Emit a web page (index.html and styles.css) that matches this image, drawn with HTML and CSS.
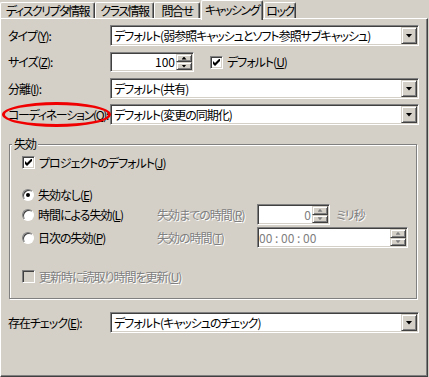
FILE: index.html
```html
<!DOCTYPE html>
<html lang="ja">
  <head>
    <meta charset="UTF-8" />
    <title>キャッシング</title>
    <link rel="stylesheet" href="styles.css">
  </head>
  <body>
    <div class="tabs">
      <div class="tab t1">ディスクリプタ情報</div>
      <div class="tab t2">クラス情報</div>
      <div class="tab t3">問合せ</div>
      <div class="tab t4 active">キャッシング</div>
      <div class="tab t5">ロック</div>
    </div>

    <div class="panel">
      <!-- upper fields -->
      <div class="row r1">
        <span class="lbl">タイプ(<u>Y</u>):</span>
        <div class="combo">
          <span class="val">デフォルト(弱参照キャッシュとソフト参照サブキャッシュ)</span>
          <span class="drop"><i class="arrow"></i></span>
        </div>
      </div>

      <div class="row r2">
        <span class="lbl">サイズ(<u>Z</u>):</span>
        <div class="spin size">
          <span class="num">100</span>
          <span class="btns"><span class="sb"><i class="up"></i></span><span class="sb"><i class="dn"></i></span></span>
        </div>
        <span class="check on def">
          <svg width="7" height="7" viewBox="0 0 7 7"><path d="M0 2L2 4L6 0H7V2L2 7H2L0 5Z" fill="#000"/></svg>
        </span>
        <span class="ctext">デフォルト(<u>U</u>)</span>
      </div>

      <div class="row r3">
        <span class="lbl">分離(<u>I</u>):</span>
        <div class="combo">
          <span class="val">デフォルト(共有)</span>
          <span class="drop"><i class="arrow"></i></span>
        </div>
      </div>

      <div class="row r4">
        <span class="ring"></span>
        <span class="lbl">コーディネーション(<u>O</u>):</span>
        <div class="combo">
          <span class="val">デフォルト(変更の同期化)</span>
          <span class="drop"><i class="arrow"></i></span>
        </div>
      </div>

      <!-- expiry group -->
      <div class="group">
        <span class="legend">失効</span>

        <div class="g-row ga">
          <span class="check on">
            <svg width="7" height="7" viewBox="0 0 7 7"><path d="M0 2L2 4L6 0H7V2L2 7H2L0 5Z" fill="#000"/></svg>
          </span>
          <span class="ctext">プロジェクトのデフォルト(<u>J</u>)</span>
        </div>

        <div class="g-row gb">
          <span class="radio on"></span>
          <span class="rtext">失効なし(<u>E</u>)</span>
        </div>

        <div class="g-row gc">
          <span class="opt"><span class="radio"></span><span class="rtext">時間による失効(<u>L</u>)</span></span>
          <span class="sub dim">失効までの時間(<u>R</u>)</span>
          <div class="spin ms">
            <span class="num dim-num">0</span>
            <span class="btns"><span class="sb"><i class="up off"></i></span><span class="sb"><i class="dn off"></i></span></span>
          </div>
          <span class="dim unit">ミリ秒</span>
        </div>

        <div class="g-row gd">
          <span class="opt"><span class="radio"></span><span class="rtext">日次の失効(<u>P</u>)</span></span>
          <span class="sub dim">失効の時間(<u>T</u>)</span>
          <div class="spin clock">
            <span class="time">00 : 00 : 00</span>
            <span class="btns"><span class="sb"><i class="up off"></i></span><span class="sb"><i class="dn off"></i></span></span>
          </div>
        </div>

        <div class="g-row ge">
          <span class="check off"></span>
          <span class="ctext dim">更新時に読取り時間を更新(<u>U</u>)</span>
        </div>
      </div>

      <div class="row r5">
        <span class="lbl">存在チェック(<u>E</u>):</span>
        <div class="combo">
          <span class="val">デフォルト(キャッシュのチェック)</span>
          <span class="drop"><i class="arrow"></i></span>
        </div>
      </div>
    </div>
  </body>
</html>
```

FILE: styles.css
```css
:root {
  --face: #d4d0c8;
  --shadow: #808080;
  --dark: #404040;
  --light: #ffffff;
  --ring: #f00000;
}
* {
  box-sizing: border-box;
}
body {
  margin: 0;
  width: 429px;
  height: 377px;
  overflow: hidden;
  background: var(--face);
  color: #000;
  font-family: "Noto Sans CJK JP", sans-serif;
  font-size: 12px;
  line-height: 14px;
  letter-spacing: -1px;
  font-feature-settings: "palt";
}
u {
  text-decoration-thickness: 1px;
  text-underline-offset: 1px;
}

/* ---------- Tabs ---------- */
.tabs {
  display: flex;
  align-items: flex-end;
  height: 18px;
}
.tab {
  height: 16px;
  padding-top: 1px;
  text-align: center;
  white-space: nowrap;
  letter-spacing: -1.5px;
  background: var(--face);
  border-top: 1px solid var(--light);
  border-left: 1px solid var(--light);
  border-right: 1px solid var(--dark);
  border-radius: 2px 2px 0 0;
  box-shadow: inset -1px 0 var(--shadow);
}
.t1 { width: 95px; }
.t2 { width: 59px; }
.t3 { width: 46px; }
.t4 { width: 62px; margin-left: 1px; }
.t5 { width: 32px; margin-left: 1px; }
.tab.active {
  position: relative;
  z-index: 1;
  height: 20px;
  margin-bottom: -2px;
  padding-top: 2px;
}

/* ---------- Panel ---------- */
.panel {
  width: 428px;
  height: 359px;
  padding: 6px 0 0 7px;
  border-top: 1px solid var(--light);
  border-left: 1px solid var(--light);
  border-right: 1px solid var(--dark);
  border-bottom: 1px solid var(--dark);
  box-shadow: inset -1px -1px var(--shadow);
}
.row {
  display: flex;
  align-items: center;
}
.r1 { height: 21px; }
.r2 { height: 20px; margin-top: 6px; }
.r3 { height: 21px; margin-top: 6px; }
.r4 { height: 21px; margin-top: 5px; position: relative; }
.r5 { height: 21px; margin-top: 13px; }
.lbl {
  width: 102px;
  white-space: nowrap;
}
.r4 .lbl {
  letter-spacing: -1.3px;
}
.ring {
  position: absolute;
  left: -6px;
  top: -2px;
  width: 109px;
  height: 25px;
  border: 3px solid var(--ring);
  border-radius: 50%;
}

/* ---------- Sunken fields ---------- */
.combo,
.spin {
  display: flex;
  align-items: center;
  height: 21px;
  background: #fff;
  border: 1px solid;
  border-color: var(--shadow) var(--light) var(--light) var(--shadow);
  box-shadow: inset 1px 1px var(--dark), inset -1px -1px var(--face);
  padding: 0 1px 0 3px;
}
.combo {
  width: 309px;
}
.val {
  flex: 1;
  white-space: nowrap;
}
.drop,
.sb {
  display: flex;
  align-items: center;
  justify-content: center;
  background: var(--face);
  border: 1px solid;
  border-color: var(--face) var(--dark) var(--dark) var(--face);
  box-shadow: inset 1px 1px var(--light), inset -1px -1px var(--shadow);
}
.drop {
  width: 16px;
  height: 17px;
}
.arrow {
  width: 7px;
  height: 4px;
  background: #000;
  clip-path: polygon(0 0, 100% 0, 50% 100%);
}

/* spinners */
.spin.size {
  width: 84px;
  height: 20px;
}
.spin.ms {
  width: 73px;
}
.spin.clock {
  width: 151px;
  padding-left: 1px;
}
.num {
  flex: 1;
  text-align: right;
  padding-right: 1px;
  letter-spacing: 0;
}
.time {
  flex: 1;
  color: var(--shadow);
  letter-spacing: 0;
}
.dim-num {
  color: var(--shadow);
}
.btns {
  display: flex;
  flex-direction: column;
  width: 16px;
  align-self: stretch;
  padding: 1px 0;
}
.sb {
  flex: 1;
}
.up,
.dn {
  width: 5px;
  height: 3px;
  background: #000;
}
.up {
  clip-path: polygon(50% 0, 100% 100%, 0 100%);
}
.dn {
  clip-path: polygon(0 0, 100% 0, 50% 100%);
}
.up.off,
.dn.off {
  background: var(--shadow);
}

/* ---------- Check boxes & radios ---------- */
.check {
  display: flex;
  align-items: center;
  justify-content: center;
  flex: none;
  width: 13px;
  height: 13px;
  background: #fff;
  border: 1px solid;
  border-color: var(--shadow) var(--light) var(--light) var(--shadow);
  box-shadow: inset 1px 1px var(--dark), inset -1px -1px var(--face);
}
.check.off {
  background: var(--face);
}
.check.def {
  margin-left: 16px;
}
.ctext {
  margin-left: 4px;
  white-space: nowrap;
}
.radio {
  display: flex;
  align-items: center;
  justify-content: center;
  flex: none;
  width: 12px;
  height: 12px;
  border-radius: 50%;
  background: #fff;
  border: 1px solid;
  border-color: var(--shadow) var(--light) var(--light) var(--shadow);
  box-shadow: inset 1px 1px var(--dark);
}
.radio.on::after {
  content: "";
  width: 4px;
  height: 4px;
  border-radius: 50%;
  background: #000;
}
.rtext {
  margin-left: 4px;
  white-space: nowrap;
}
.dim {
  color: var(--shadow);
  text-shadow: 1px 1px var(--light);
}

/* ---------- Expiry group ---------- */
.group {
  position: relative;
  width: 408px;
  height: 155px;
  margin: 19px 0 0 1px;
  padding: 11px 0 0 12px;
  border: 1px solid var(--shadow);
  box-shadow: inset 1px 1px var(--light), 1px 1px var(--light);
}
.legend {
  position: absolute;
  left: 2px;
  top: -8px;
  padding: 0 2px;
  background: var(--face);
}
.g-row {
  display: flex;
  align-items: center;
}
.ga { height: 13px; }
.gb { height: 13px; margin-top: 19px; }
.gc { height: 21px; margin-top: 3px; }
.gd { height: 21px; margin-top: 2px; }
.ge { height: 13px; margin-top: 22px; }
.opt {
  display: flex;
  align-items: center;
  width: 135px;
}
.sub {
  width: 100px;
  white-space: nowrap;
}
.unit {
  margin-left: 6px;
}
```
